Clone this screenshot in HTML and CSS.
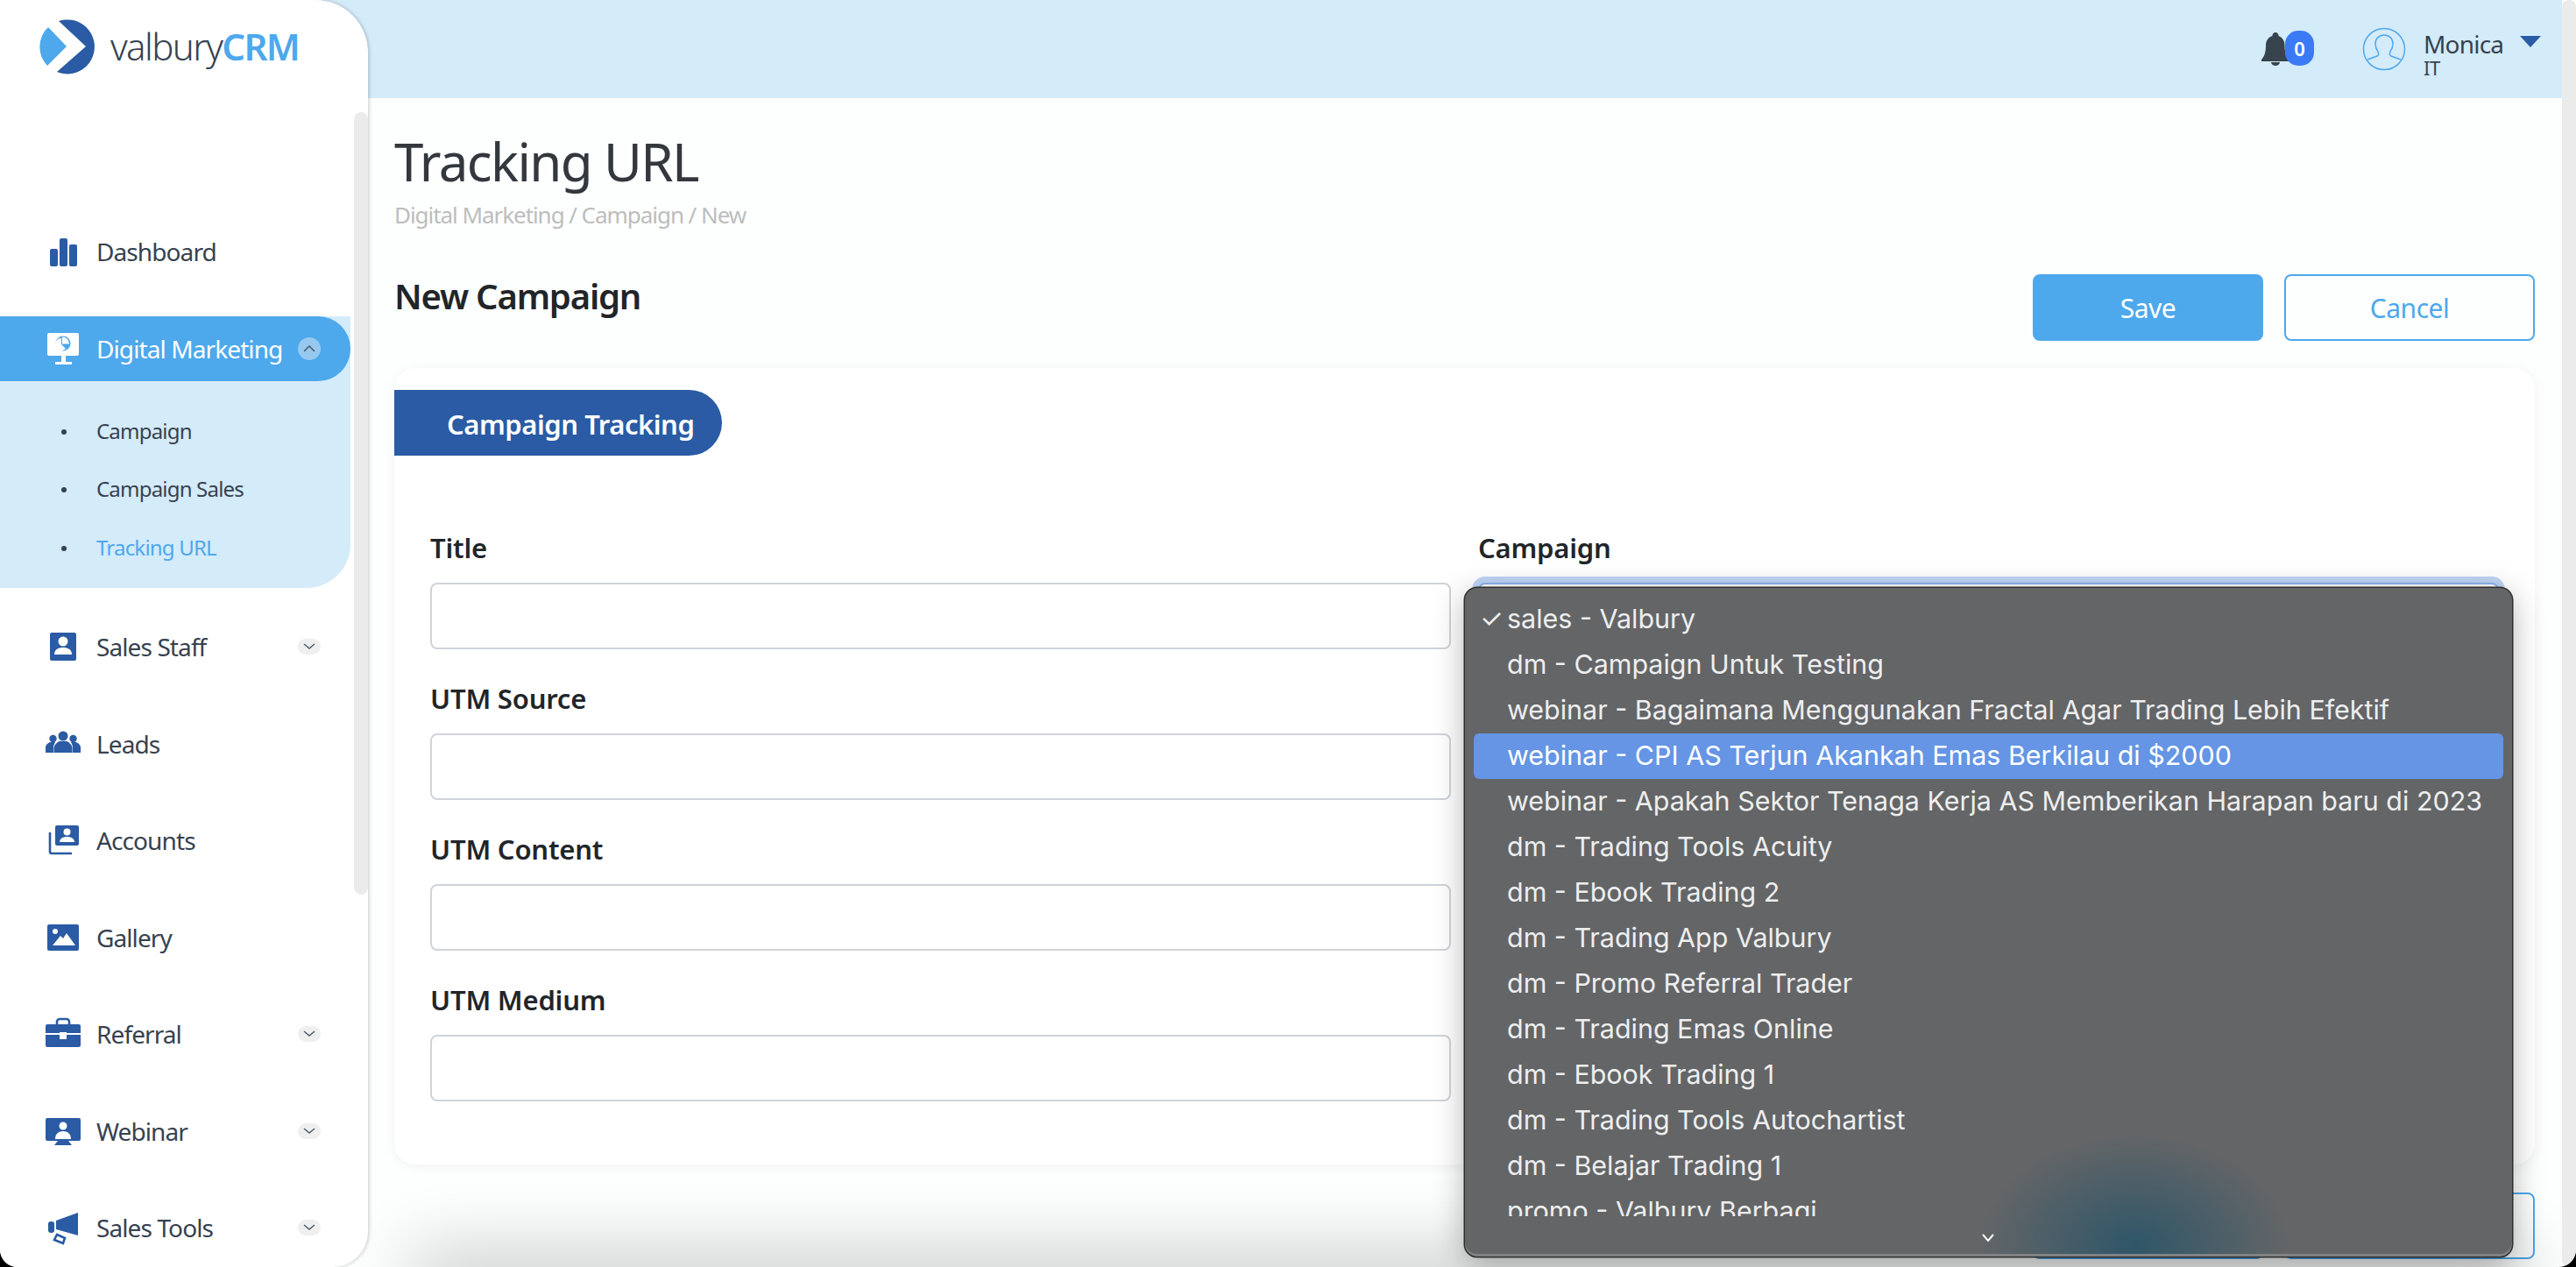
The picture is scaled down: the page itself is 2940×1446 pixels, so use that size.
FILE: index.html
```html
<!DOCTYPE html>
<html lang="en">
  <head>
    <meta charset="UTF-8" />
    <meta name="viewport" content="width=device-width, initial-scale=1.0" />
    <title>Tracking URL</title>
    <link rel="stylesheet" href="styles.css">
  </head>
  <body>
    <div class="window">

      <aside class="sidebar">
        <div class="logo">
          <svg width="120" height="106" viewBox="0 0 120 106">
            <path d="M55 31 L76 53 L54 75 A31 31 0 0 1 55 31Z" fill="#4da8ec"/>
            <path d="M67 24 A31 31 0 1 1 65 82 L98 53Z" fill="#2a5ba4"/>
          </svg>
          <span class="logo-text">valbury<b>CRM</b></span>
        </div>

        <nav class="nav">
          <div class="nav-item">
            <svg class="nav-icon" viewBox="0 0 40 40"><rect x="5" y="17" width="9" height="20" rx="2"/><rect x="16" y="5" width="9" height="32" rx="2"/><rect x="27" y="12" width="9" height="25" rx="2"/></svg>
            <span class="nav-label">Dashboard</span>
          </div>

          <div class="nav-group">
            <div class="nav-item active">
              <svg class="nav-icon" viewBox="0 0 40 40"><path d="M4 2h32a2 2 0 0 1 2 2v22a2 2 0 0 1-2 2H23v7h7v3H11v-3h7v-7H4a2 2 0 0 1-2-2V4a2 2 0 0 1 2-2z" fill="#fff"/><circle cx="20" cy="14" r="8.5" fill="#4da8ec"/><path d="M19 6.5v8h8a8 8 0 0 0-8-8zM18 8a7 7 0 1 0 5 12l-5-5z" fill="#fff"/></svg>
              <span class="nav-label">Digital Marketing</span>
              <span class="toggle open"><svg width="14" height="8" viewBox="0 0 14 8"><path d="M1 7l6-6 6 6" fill="none" stroke="#4a5b6b" stroke-width="1.5"/></svg></span>
            </div>
            <ul class="sub-nav">
              <li>Campaign</li>
              <li>Campaign Sales</li>
              <li class="current">Tracking URL</li>
            </ul>
          </div>

          <div class="nav-item">
            <svg class="nav-icon" viewBox="0 0 40 40"><path d="M7 4h26a2 2 0 0 1 2 2v22 6a2 2 0 0 1-2 2H7a2 2 0 0 1-2-2V6a2 2 0 0 1 2-2z"/><circle cx="20" cy="14" r="5.5" fill="#fff"/><path d="M10 29c0-6 5-8 10-8s10 2 10 8z" fill="#fff"/></svg>
            <span class="nav-label">Sales Staff</span>
            <span class="toggle"><svg width="14" height="8" viewBox="0 0 14 8"><path d="M1 1l6 5 6-5" fill="none" stroke="#4a5b6b" stroke-width="1.5"/></svg></span>
          </div>
          <div class="nav-item">
            <svg class="nav-icon" viewBox="0 0 40 40"><circle cx="20" cy="11" r="5.5"/><circle cx="8.5" cy="14" r="4.2"/><circle cx="31.5" cy="14" r="4.2"/><path d="M9.5 30v-5c0-4 4-7 6-8h9c2 1 6 4 6 8v5z"/><path d="M0 30v-6c0-3 3-5 5-6h6c-1 2-2 4-2 6v6zM40 30v-6c0-3-3-5-5-6h-6c1 2 2 4 2 6v6z"/></svg>
            <span class="nav-label">Leads</span>
          </div>
          <div class="nav-item">
            <svg class="nav-icon" viewBox="0 0 40 40"><path d="M13 3h23a2 2 0 0 1 2 2v19a2 2 0 0 1-2 2H13a2 2 0 0 1-2-2V5a2 2 0 0 1 2-2z"/><path d="M5 11v22a2 2 0 0 0 2 2h23" fill="none" stroke="#2a5ba4" stroke-width="2.6"/><circle cx="24.5" cy="10.500" r="4" fill="#fff"/><path d="M16 22c0-4 4-6 8.500-6s8.500 2 8.500 6z" fill="#fff"/></svg>
            <span class="nav-label">Accounts</span>
          </div>
          <div class="nav-item">
            <svg class="nav-icon" viewBox="0 0 40 40"><rect x="2" y="5" width="36" height="30" rx="2"/><circle cx="11" cy="13" r="3" fill="#fff"/><path d="M8 29l9-11 3 3 4-6 10 14z" fill="#fff"/></svg>
            <span class="nav-label">Gallery</span>
          </div>
          <div class="nav-item">
            <svg class="nav-icon" viewBox="0 0 40 40"><path d="M13 9V6a3 3 0 0 1 3-3h8a3 3 0 0 1 3 3v3" fill="none" stroke="#2a5ba4" stroke-width="2.6"/><path d="M2 9h36a2 2 0 0 1 2 2v8H0v-8a2 2 0 0 1 2-2zM0 21h40v12a2 2 0 0 1-2 2H2a2 2 0 0 1-2-2z"/><rect x="16" y="18" width="8" height="8" fill="#fff"/></svg>
            <span class="nav-label">Referral</span>
            <span class="toggle"><svg width="14" height="8" viewBox="0 0 14 8"><path d="M1 1l6 5 6-5" fill="none" stroke="#4a5b6b" stroke-width="1.5"/></svg></span>
          </div>
          <div class="nav-item">
            <svg class="nav-icon" viewBox="0 0 40 40"><path d="M2 5h36a2 2 0 0 1 2 2v22a2 2 0 0 1-2 2H26l4 5H10l4-5H2a2 2 0 0 1-2-2V7a2 2 0 0 1 2-2z"/><circle cx="20" cy="14" r="4.500" fill="#fff"/><path d="M11 29c0-6 4-9 9-9s9 3 9 9z" fill="#fff"/></svg>
            <span class="nav-label">Webinar</span>
            <span class="toggle"><svg width="14" height="8" viewBox="0 0 14 8"><path d="M1 1l6 5 6-5" fill="none" stroke="#4a5b6b" stroke-width="1.5"/></svg></span>
          </div>
          <div class="nav-item">
            <svg class="nav-icon" viewBox="0 0 40 40"><rect x="3" y="13" width="7" height="13" rx="3"/><path d="M12 12l25-9v26l-25-7z"/><path d="M13 28l9 4-2 6-10-4z" fill="none" stroke="#2a5ba4" stroke-width="2.6"/></svg>
            <span class="nav-label">Sales Tools</span>
            <span class="toggle"><svg width="14" height="8" viewBox="0 0 14 8"><path d="M1 1l6 5 6-5" fill="none" stroke="#4a5b6b" stroke-width="1.5"/></svg></span>
          </div>
        </nav>
        <div class="side-scroll"></div>
      </aside>

      <div class="main">
        <header class="topbar">
          <div class="bell">
            <svg width="32" height="40" viewBox="0 0 32 40"><path d="M16 1a3.500 3.500 0 0 1 3.500 4c5 2 7 6 7 11 0 8 2 13 5 16v2H0v-2c3-3 5-8 5-16 0-5 2-9 7.500-11A3.500 3.500 0 0 1 16 1z" fill="#37444d"/><path d="M11 35h10a5 4 0 0 1-10 0z" fill="#37444d"/></svg>
            <span class="badge">0</span>
          </div>
          <svg class="avatar" width="50" height="50" viewBox="0 0 50 50"><circle cx="25" cy="25" r="23.500" fill="none" stroke="#4da8ec" stroke-width="1.500"/><path d="M6 37l11-4c2-1 2-3 1-5-2-3-3-6-3-9 0-6 4-10 10-10s10 4 10 10c0 3-1 6-3 9-1 2-1 4 1 5l11 4" fill="none" stroke="#4da8ec" stroke-width="1.500"/></svg>
          <div class="user">
            <div class="user-name">Monica</div>
            <div class="user-dept">IT</div>
          </div>
          <svg class="caret" width="26" height="15" viewBox="0 0 26 15"><path d="M1 1h24L13 14z" fill="#2a5ba4"/></svg>
        </header>

        <div class="content">
          <h1 class="page-title">Tracking URL</h1>
          <div class="breadcrumb">Digital Marketing / Campaign / New</div>

          <div class="title-row">
            <h2 class="form-title">New Campaign</h2>
            <div class="actions">
              <button class="btn btn-save">Save</button>
              <button class="btn btn-cancel">Cancel</button>
            </div>
          </div>

          <section class="card">
            <div class="tab">Campaign Tracking</div>
            <div class="form-grid">
              <div class="form-col">
                <div class="field"><label>Title</label><div class="input"></div></div>
                <div class="field"><label>UTM Source</label><div class="input"></div></div>
                <div class="field"><label>UTM Content</label><div class="input"></div></div>
                <div class="field"><label>UTM Medium</label><div class="input"></div></div>
              </div>
              <div class="form-col">
                <div class="field"><label>Campaign</label><div class="input focused"></div></div>
              </div>
            </div>
          </section>

          <div class="actions bottom">
            <button class="btn btn-save">Save</button>
            <button class="btn btn-cancel">Cancel</button>
          </div>
        </div>
        <div class="bottom-shade"></div>
      </div>

      <div class="page-scroll"></div>

      <div class="select-menu">
        <ul class="select-list">
          <li class="checked">sales - Valbury</li>
          <li>dm - Campaign Untuk Testing</li>
          <li>webinar - Bagaimana Menggunakan Fractal Agar Trading Lebih Efektif</li>
          <li class="hover">webinar - CPI AS Terjun Akankah Emas Berkilau di $2000</li>
          <li>webinar - Apakah Sektor Tenaga Kerja AS Memberikan Harapan baru di 2023</li>
          <li>dm - Trading Tools Acuity</li>
          <li>dm - Ebook Trading 2</li>
          <li>dm - Trading App Valbury</li>
          <li>dm - Promo Referral Trader</li>
          <li>dm - Trading Emas Online</li>
          <li>dm - Ebook Trading 1</li>
          <li>dm - Trading Tools Autochartist</li>
          <li>dm - Belajar Trading 1</li>
          <li>promo - Valbury Berbagi</li>
        </ul>
        <svg class="more" width="16" height="11" viewBox="0 0 16 11"><path d="M2 2l6 7 6-7" fill="none" stroke="#fff" stroke-width="2"/></svg>
      </div>

    </div>
  </body>
</html>
```

FILE: styles.css
```css
* {
  box-sizing: border-box;
}

body {
  margin: 0;
  background: #000;
  font-family: "Noto Sans", Arial, sans-serif;
  color: #212529;
}

.window {
  position: relative;
  display: flex;
  width: 2940px;
  height: 1446px;
  overflow: hidden;
  background: #fdfffe;
  border-radius: 0 0 20px 20px;
}

/* sidebar */
.sidebar {
  position: relative;
  z-index: 2;
  flex: 0 0 420px;
  height: 1446px;
  background: #fff;
  border-radius: 0 60px 40px 0;
  box-shadow: 1px 0 4px rgba(0, 0, 0, 0.22);
  overflow: hidden;
}

.logo {
  display: flex;
  height: 232px;
  align-items: flex-start;
}

.logo-text {
  margin: 23px 0 0 6px;
  font-size: 42px;
  font-weight: 300;
  letter-spacing: -1.6px;
  line-height: 60px;
  color: #36424f;
}

.logo-text b {
  font-weight: 600;
  color: #4da8ec;
}

.nav-item {
  display: flex;
  align-items: center;
  height: 110.5px;
  width: 400px;
  padding-left: 52px;
  font-size: 28px;
  letter-spacing: -0.9px;
  color: #36424f;
}

.nav-icon {
  flex: 0 0 40px;
  width: 40px;
  height: 40px;
  margin-right: 18px;
  fill: #2a5ba4;
}

.nav-label {
  flex: 1;
}

.toggle {
  display: flex;
  align-items: center;
  justify-content: center;
  width: 26px;
  height: 18px;
  margin-right: 34px;
  border-radius: 13px;
  background: #efefef;
}

.toggle.open {
  height: 26px;
  background: #97c9f0;
}

.nav-group {
  width: 400px;
  margin-top: 18px;
  margin-bottom: 12px;
  background: #d4ebfa;
  border-radius: 0 0 50px 0;
}

.nav-item.active {
  height: 74px;
  background: #4da8ec;
  color: #fff;
  border-radius: 0 37px 37px 0;
}

.sub-nav {
  list-style: none;
  margin: 0;
  padding: 24px 0 13px 110px;
  font-size: 24px;
  letter-spacing: -0.8px;
  color: #36424f;
}

.sub-nav li {
  position: relative;
  height: 66.500px;
  line-height: 66px;
}

.sub-nav li::before {
  content: "";
  position: absolute;
  left: -40px;
  top: 31px;
  width: 6px;
  height: 6px;
  border-radius: 50%;
  background: #36424f;
}

.sub-nav .current {
  color: #4da8ec;
}

.side-scroll {
  position: absolute;
  top: 128px;
  right: 0;
  width: 16px;
  height: 893px;
  background: #ebebeb;
  border-radius: 8px;
}

/* top bar */
.main {
  position: relative;
  flex: 1;
  min-width: 0;
  height: 1446px;
}

.topbar {
  display: flex;
  align-items: center;
  justify-content: flex-end;
  height: 112px;
  margin-left: -60px;
  padding-right: 23px;
  background: #d4ebfa;
}

.bell {
  position: relative;
  width: 60px;
  height: 40px;
  margin-right: 55px;
}

.badge {
  position: absolute;
  left: 27px;
  top: -1px;
  width: 33px;
  height: 40px;
  border-radius: 15px;
  background: #3a7bf5;
  color: #fff;
  font-size: 22px;
  font-weight: 600;
  line-height: 40px;
  text-align: center;
}

.avatar {
  margin-right: 20px;
}

.user {
  width: 109px;
  color: #36424f;
}

.user-name {
  font-size: 28px;
  line-height: 32px;
  letter-spacing: -0.8px;
  margin-top: 8px;
}

.user-dept {
  margin-top: 1px;
  font-size: 22px;
  line-height: 20px;
  letter-spacing: -0.5px;
}

.caret {
  margin-bottom: 18px;
}

/* page content */
.content {
  padding: 0 31px 0 30px;
}

.page-title {
  margin: 32px 0 4px;
  font-size: 60px;
  font-weight: 400;
  line-height: 80px;
  letter-spacing: -1.6px;
  color: #32383d;
}

.breadcrumb {
  font-size: 26px;
  line-height: 34px;
  letter-spacing: -1.05px;
  color: #bdbdbd;
}

.title-row {
  display: flex;
  justify-content: space-between;
  align-items: flex-start;
  margin-top: 51px;
}

.form-title {
  margin: 0;
  font-size: 40px;
  font-weight: 600;
  line-height: 50px;
  letter-spacing: -1.2px;
}

.actions {
  display: flex;
  gap: 24px;
}

.actions.bottom {
  justify-content: flex-end;
  margin-top: 32px;
}

.btn {
  height: 76px;
  border-radius: 8px;
  border: 2px solid #4da8ec;
  font-family: inherit;
  font-size: 30px;
  letter-spacing: -0.5px;
}

.btn-save {
  width: 263px;
  background: #4da8ec;
  color: #fff;
}

.btn-cancel {
  width: 286px;
  background: #fdfffe;
  color: #4da8ec;
}

.card {
  height: 909px;
  margin-top: 31px;
  padding-top: 25px;
  background: #fff;
  border-radius: 24px;
  box-shadow: 0 2px 14px rgba(0, 0, 0, 0.05);
}

.tab {
  width: 374px;
  height: 75px;
  padding-left: 60px;
  background: #2a5ba4;
  border-radius: 0 38px 38px 0;
  color: #fff;
  font-size: 31px;
  font-weight: 600;
  line-height: 79px;
  letter-spacing: -0.45px;
  white-space: nowrap;
}

.form-grid {
  display: grid;
  grid-template-columns: 1fr 1fr;
  gap: 31px;
  margin-top: 85px;
  padding: 0 41px;
}

.field {
  margin-bottom: 36px;
}

.field label {
  display: block;
  height: 40px;
  margin-bottom: 20px;
  font-size: 31px;
  font-weight: 600;
  line-height: 40px;
  letter-spacing: -0.2px;
}

.input {
  height: 76px;
  background: #fff;
  border: 2px solid #cfd4da;
  border-radius: 8px;
}

.input.focused {
  border-color: #8db4ee;
  box-shadow: 0 0 0 7px #bfd4f5;
}

.bottom-shade {
  position: absolute;
  left: 70px;
  right: 60px;
  bottom: -30px;
  height: 30px;
  box-shadow: 0 0 80px 20px rgba(0, 0, 0, 0.2);
}

.page-scroll {
  flex: 0 0 16px;
  position: relative;
  z-index: 1;
  background: #ebebeb;
  border-radius: 8px;
}

/* native style select popup */
.select-menu {
  position: absolute;
  z-index: 5;
  left: 1672px;
  top: 671px;
  width: 1195px;
  height: 763px;
  padding: 10px 10px 0;
  border-radius: 14px;
  background: radial-gradient(ellipse 175px 125px at 764px 750px, #2f5668, rgba(47, 86, 104, 0) 100%), #636567;
  box-shadow: 0 0 0 1.500px #2e2e2e, inset 0 -3px 0 #808283, 0 8px 36px rgba(0, 0, 0, 0.3);
  font-family: Inter, "Liberation Sans", sans-serif;
  font-size: 30.45px;
  color: #eeeeee;
}

.select-list {
  list-style: none;
  height: 707px;
  margin: 0;
  padding: 0;
  overflow: hidden;
}

.select-list li {
  position: relative;
  height: 52px;
  padding-left: 38px;
  line-height: 50px;
  border-radius: 6px;
  white-space: nowrap;
}

.select-list .checked::before {
  content: "\2713";
  position: absolute;
  left: 7px;
  font-size: 30px;
}

.select-list .hover {
  background: #6595e4;
  color: #fff;
}

.more {
  position: absolute;
  left: 589px;
  top: 736px;
}
```
